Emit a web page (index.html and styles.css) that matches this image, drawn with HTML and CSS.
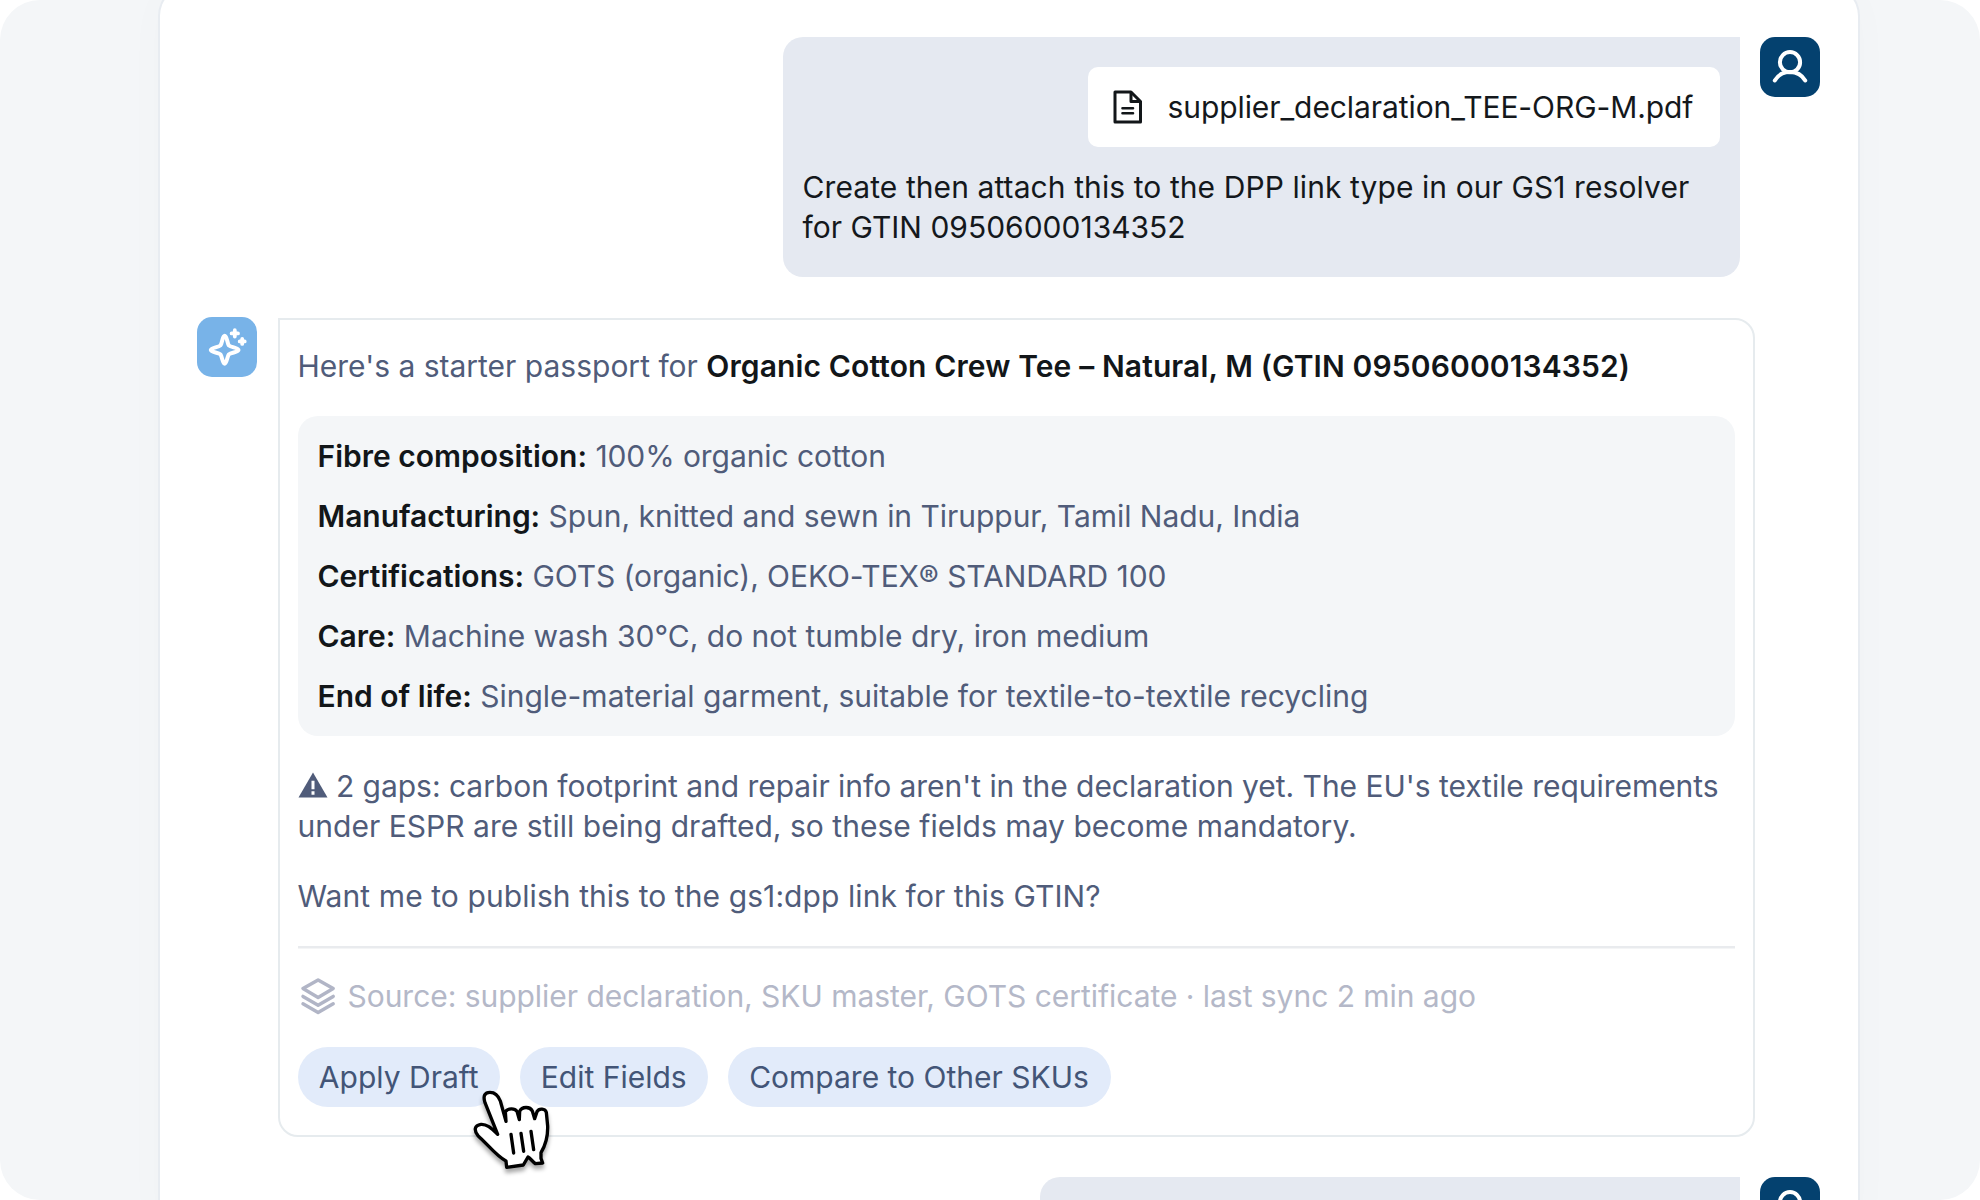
FILE: index.html
```
<!DOCTYPE html>
<html lang="en">
<head>
<meta charset="utf-8">
<title>Product passport assistant</title>
<link rel="stylesheet" href="styles.css">
</head>
<body>
<svg class="defs" aria-hidden="true">
  <symbol id="user" viewBox="0 0 60 60"><g fill="none" stroke="#fff" stroke-width="4" stroke-linecap="round"><circle cx="30" cy="25.2" r="10.1"/><path d="M14.8 43.5C18 38 23.5 35 30 35s12 3 15.200 8.500"/></g></symbol>
</svg>
<div class="stage">
  <main class="panel">
    <section class="message message-user">
      <div class="bubble">
        <div class="file">
          <svg class="file-icon" viewBox="0 0 30 34" fill="none" stroke="#121619" stroke-width="3" stroke-linejoin="round"><path d="M2 2h16l9.500 9.500V32H2z"/><path d="M18 2v9.500h9.500"/><path stroke-linecap="round" stroke-width="2.600" d="M9.500 18.200h10.500M9.500 23.300h10.500"/></svg>
          <span class="tighter">supplier_declaration_TEE-ORG-M.pdf</span>
        </div>
        <p><span class="looser">Create then attach this to the DPP link type in our GS1 resolver</span><br>for GTIN 09506000134352</p>
      </div>
      <div class="avatar"><svg><use href="#user"/></svg></div>
    </section>

    <section class="message message-ai">
      <div class="avatar avatar-ai">
        <svg viewBox="0 0 60 60" fill="none" stroke="#fff" stroke-linecap="round" stroke-linejoin="round"><path stroke-width="4" d="M27.700 18.800C30 18.800 30.200 26 31.800 28.300C34 30.500 41.500 30.500 41.500 33C41.500 35.400 34 35.300 31.800 37.400C30 40 29.800 46.700 27.700 46.700C25.500 46.700 25.300 40 23.500 37.400C21.300 35.300 13.800 35.400 13.800 33C13.800 30.500 21.300 30.500 23.500 28.300C25.300 26 25.400 18.800 27.700 18.800Z"/><path stroke-width="3.800" d="M37.800 13.200v6.400M34.600 16.400h6.400M45.200 21.900v5M42.700 24.400h5"/></svg>
      </div>
      <article class="card">
        <p>Here's a starter passport for <strong class="product">Organic Cotton Crew Tee – Natural, M (GTIN 09506000134352)</strong></p>
        <ul class="facts">
          <li><strong>Fibre composition:</strong> <span class="tighter">100% organic cotton</span></li>
          <li class="tight"><strong>Manufacturing:</strong> Spun, knitted and sewn in Tiruppur, Tamil Nadu, India</li>
          <li><strong>Certifications:</strong> <span class="tighter">GOTS (organic), OEKO-TEX® STANDARD 100</span></li>
          <li><strong>Care:</strong> Machine wash 30°C, do not tumble dry, iron medium</li>
          <li><strong>End of life:</strong> Single-material garment, suitable for textile-to-textile recycling</li>
        </ul>
        <p><svg class="warn" viewBox="0 0 30 26"><path fill="#505c7a" d="M15 0.500L29.500 25.500H.500z"/><path stroke="#fff" stroke-width="3" d="M15 8.800v8.400M15 19.300v3.400"/></svg> <span class="tight">2 gaps: carbon footprint and repair info aren't in the declaration yet. The EU's textile requirements</span><br><span class="loose">under ESPR are still being drafted, so these fields may become mandatory.</span></p>
        <p class="looser">Want me to publish this to the gs1:dpp link for this GTIN?</p>
        <footer class="source">
          <svg class="layers" viewBox="0 0 40 40" fill="none" stroke="#b1b5c6" stroke-width="3.500" stroke-linejoin="round" stroke-linecap="round"><path d="M20.100 4L35.200 12.500L20.100 21.500L5 12.500Z"/><path d="M5 20.400L20.100 29.200L35.200 20.400M5 27.800L20.100 36.500L35.200 27.800"/></svg>
          <span class="tight">Source: supplier declaration, SKU master, GOTS certificate · last sync 2 min ago</span>
        </footer>
        <div class="actions">
          <button class="b1">Apply Draft</button>
          <button class="b2">Edit Fields</button>
          <button class="b3">Compare to Other SKUs</button>
        </div>
      </article>
    </section>

    <section class="message message-user">
      <div class="bubble bubble-next"></div>
      <div class="avatar"><svg><use href="#user"/></svg></div>
    </section>
  </main>
  <svg class="cursor" viewBox="570 200 260 290" stroke="#000" stroke-linejoin="round" stroke-linecap="round">
    <path fill="#fff" stroke-width="10" d="M653 342L615 247C608 226 615 216 630 216C646 216 655 226 661 242L678 303L676 274C684 263 704 263 711 273L718 298L719 273C726 258 750 258 757 272L764 295L771 274C777 263 796 264 799 276L803 317C804 350 797 374 783 397L783 414L788 428L766 430C757 423 751 414 744 410L730 434L680 441L678 422C650 408 622 371 594 346C581 330 583 315 603 312C620 311 632 321 653 342Z"/>
    <path fill="none" stroke-width="10" d="M693 342L701 398M723 339L731 393M753 333L761 388"/>
  </svg>
</div>
</body>
</html>
```
FILE: styles.css
```
* { box-sizing: border-box; }
body { margin: 0; background: #fff; }
p, ul { margin: 0; padding: 0; list-style: none; }
.defs { position: absolute; width: 0; height: 0; }

.stage {
  position: relative;
  width: 1980px;
  height: 1200px;
  padding: 0 122px 0 160px;
  overflow: hidden;
  border-radius: 40px;
  background: #f4f6f8;
  font: 400 30px/40px Inter, "Liberation Sans", sans-serif;
  color: #505c7a;
}
.panel {
  display: flex;
  flex-direction: column;
  gap: 40px;
  height: 1260px;
  margin-top: -14px;
  padding: 51px 38px 0 37px;
  border-radius: 30px;
  background: #fff;
  box-shadow: 0 0 0 2px #e8ecf1, 0 0 50px rgba(60, 85, 120, .02);
}
.message { display: flex; gap: 20px; align-items: flex-start; }
.message-user { justify-content: flex-end; }

.bubble {
  display: flex;
  flex-direction: column;
  align-items: flex-end;
  gap: 20px;
  width: 957.5px;
  height: 240px;
  padding: 30px 20px;
  border-radius: 20px 0 20px 20px;
  background: #e5e9f1;
  color: #14181c;
}
.bubble p { align-self: stretch; white-space: nowrap; }
.bubble-next { width: 700px; }
.file {
  display: flex;
  align-items: center;
  gap: 25px;
  width: 632.5px;
  height: 80px;
  padding: 0 25px;
  border-radius: 10px;
  background: #fff;
  white-space: nowrap;
}
.file-icon { flex: none; width: 30px; height: 34px; }

.avatar {
  flex: none;
  width: 60px;
  height: 60px;
  border-radius: 15px;
  background: #04416f;
}
.avatar-ai { background: #78b3e8; }
.avatar svg { display: block; width: 60px; height: 60px; }

.card {
  display: flex;
  flex-direction: column;
  gap: 30px;
  width: 1477px;
  height: 819px;
  margin: 1px 0 0 .5px;
  padding: 26px 18px;
  border: 2px solid #e6ebee;
  border-radius: 0 20px 20px 20px;
  background: #fff;
  white-space: nowrap;
}
.message-ai { height: 820px; }
.card strong { font-weight: 600; color: #121619; }
.card .product { letter-spacing: .12px; }
.tight { letter-spacing: -.035px; }
.tighter { letter-spacing: -.08px; }
.loose { letter-spacing: .03px; }
.looser { letter-spacing: .085px; }
.facts {
  display: flex;
  flex-direction: column;
  gap: 20px;
  padding: 20px;
  border-radius: 20px;
  background: #f4f6f8;
}
.warn { width: 30px; height: 26px; vertical-align: -1px; }
.source {
  display: flex;
  align-items: center;
  gap: 10px;
  height: 70px;
  padding-top: 30px;
  box-shadow: inset 0 2.5px #e9ebee;
  color: #b4b8c8;
}
.layers { width: 40px; height: 40px; }
.actions { display: flex; gap: 20px; padding-top: 1px; }
.actions button {
  height: 60px;
  padding: 0 0 1px;
  border: 0;
  border-radius: 30px;
  background: #e2ebfa;
  color: #435577;
  font: inherit;
}
.b1 { width: 202.5px; }
.b2 { width: 187.5px; }
.b3 { width: 383px; }

.cursor {
  position: absolute;
  left: 470px;
  top: 1086.67px;
  width: 86.67px;
  height: 96.67px;
  overflow: visible;
  filter: drop-shadow(0 4px 2px rgba(0, 0, 0, .35));
}
```
